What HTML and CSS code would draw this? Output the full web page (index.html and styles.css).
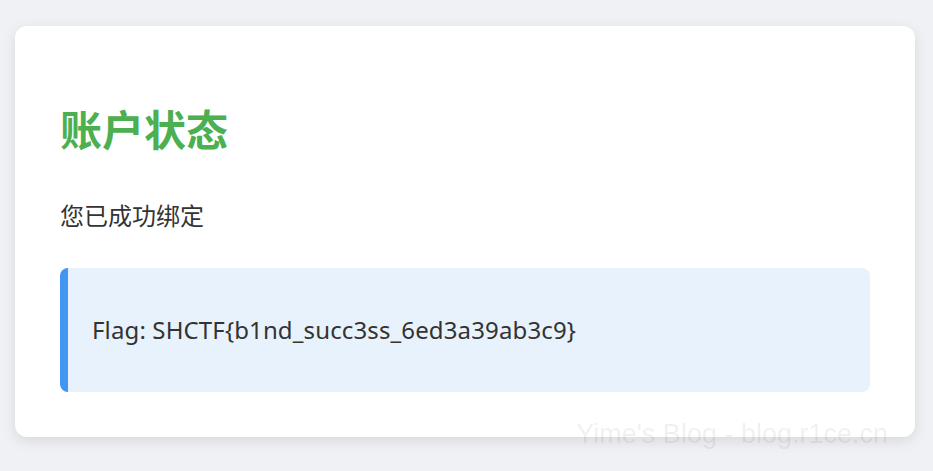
FILE: index.html
```html
<!DOCTYPE html>
<html lang="zh-CN">
<head>
<meta charset="utf-8">
<title>账户状态</title>
<link rel="stylesheet" href="styles.css">
</head>
<body>
<div class="card">
  <h1 class="title">账户状态</h1>
  <p class="status">您已成功绑定</p>
  <div class="flag-box">
    <p class="flag">Flag: SHCTF{b1nd_succ3ss_6ed3a39ab3c9}</p>
  </div>
</div>
<div class="watermark">Yime's Blog - blog.r1ce.cn</div>
</body>
</html>
```

FILE: styles.css
```css
html, body {
  margin: 0;
  padding: 0;
}
body {
  background: #f0f1f5;
  font-family: "Noto Sans", "Noto Sans CJK SC", sans-serif;
  color: #333;
  min-height: 471px;
  padding-top: 26px;
  box-sizing: border-box;
}
.card {
  width: 900px;
  margin: 0 0 0 15px;
  box-sizing: border-box;
  background: #fff;
  border-radius: 12px;
  padding: 45px;
  box-shadow: 0 4px 14px rgba(0, 0, 0, 0.1);
}
.title {
  margin: 27px 0 0;
  font-family: "Noto Sans CJK SC", sans-serif;
  font-size: 42px;
  line-height: 60px;
  font-weight: 700;
  color: #4caf50;
}
.status {
  margin: 39px 0 35px;
  font-size: 24px;
  line-height: 36px;
  font-family: "Noto Sans CJK SC", sans-serif;
}
.flag-box {
  background: #e8f2fc;
  border-left: 8px solid #4295f2;
  border-radius: 8px;
  padding: 43px 24px 44px;
}
.flag {
  margin: 0;
  font-size: 24px;
  line-height: 37px;
  letter-spacing: 0.13px;
}
.watermark {
  position: fixed;
  right: 45px;
  bottom: 21px;
  font-family: "Liberation Sans", Arial, sans-serif;
  font-size: 27px;
  color: rgba(0, 0, 0, 0.06);
  pointer-events: none;
}
```
